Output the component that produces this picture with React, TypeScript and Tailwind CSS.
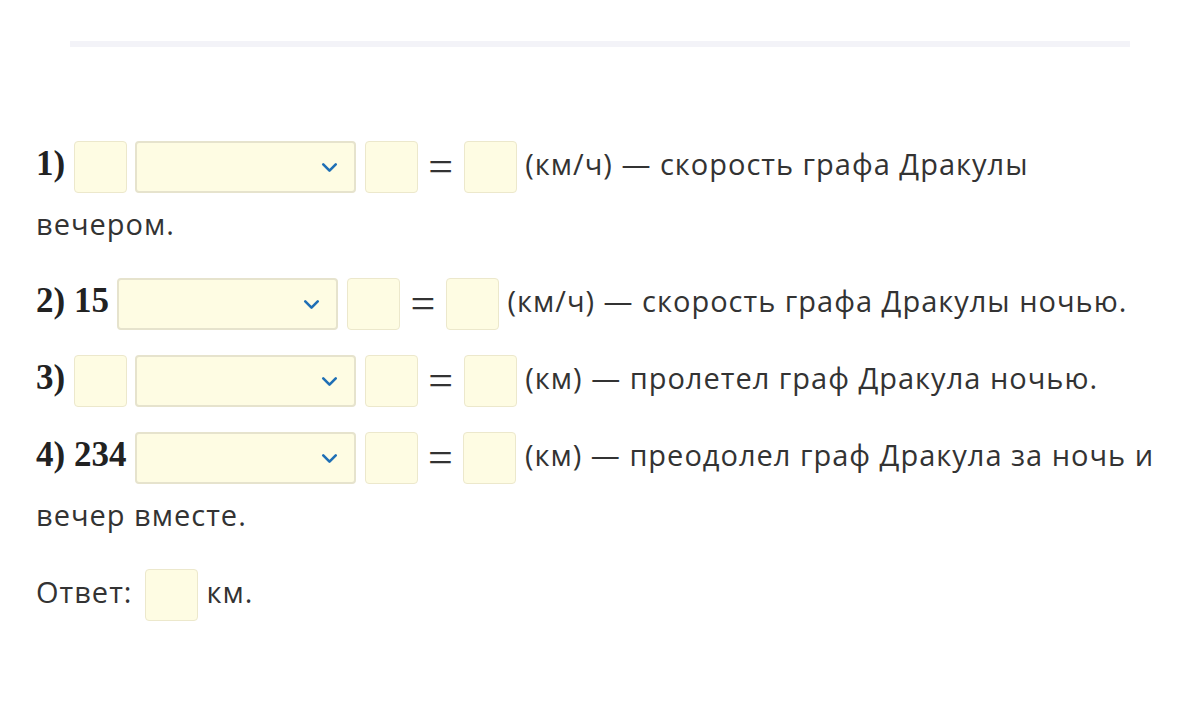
import { ChevronDown } from 'lucide-react'

const Box = () => (
  <span className="inline-block h-[52px] w-[53px] rounded-[4px] border border-[#ece8cc] bg-[#fefce3] align-middle" />
)

const Select = () => (
  <span className="inline-flex h-[52px] w-[221px] items-center justify-end rounded-[4px] border-2 border-[#e6e3cd] bg-[#fefce3] pr-[12px] align-middle">
    <ChevronDown className="h-[25px] w-[25px] text-[#1f6fb5]" strokeWidth={2.5} />
  </span>
)

const Num = ({ children }: { children: React.ReactNode }) => (
  <span className="text-[35px] font-bold tracking-normal text-[#222]" style={{ fontFamily: '"Liberation Serif", "DejaVu Serif", serif' }}>
    {children}
  </span>
)

const Eq = () => (
  <span className="mx-[2px] inline-block align-middle text-[44px] leading-none tracking-normal text-[#333]" style={{ fontFamily: '"Liberation Serif", serif' }}>
    =
  </span>
)

export default function App() {
  return (
    <div className="min-h-[708px] w-[1200px] bg-white text-[29px] tracking-[1px] text-[#333]" style={{ fontFamily: '"Open Sans", "Noto Sans", sans-serif' }}>
      <div className="pt-[41px] px-[70px]">
        <div className="h-[6px] bg-[#f3f3f8]" />
      </div>

      <div className="mt-[87px] px-[36px] leading-[60px]">
        <p>
          <Num>1)</Num> <Box /> <Select /> <Box /> <Eq /> <Box /> (км/ч) — скорость графа Дракулы вечером.
        </p>
        <p className="mt-[17px]">
          <Num>2) 15</Num> <Select /> <Box /> <Eq /> <Box /> (км/ч) — скорость графа Дракулы ночью.
        </p>
        <p className="mt-[17px]">
          <Num>3)</Num> <Box /> <Select /> <Box /> <Eq /> <Box /> (км) — пролетел граф Дракула ночью.
        </p>
        <p className="mt-[17px]">
          <Num>4) 234</Num> <Select /> <Box /> <Eq /> <Box /> (км) — преодолел граф Дракула за ночь и вечер вместе.
        </p>
        <p className="mt-[17px]">
          Ответ:<span className="ml-[4px]" /> <Box /> км.
        </p>
      </div>
    </div>
  )
}
